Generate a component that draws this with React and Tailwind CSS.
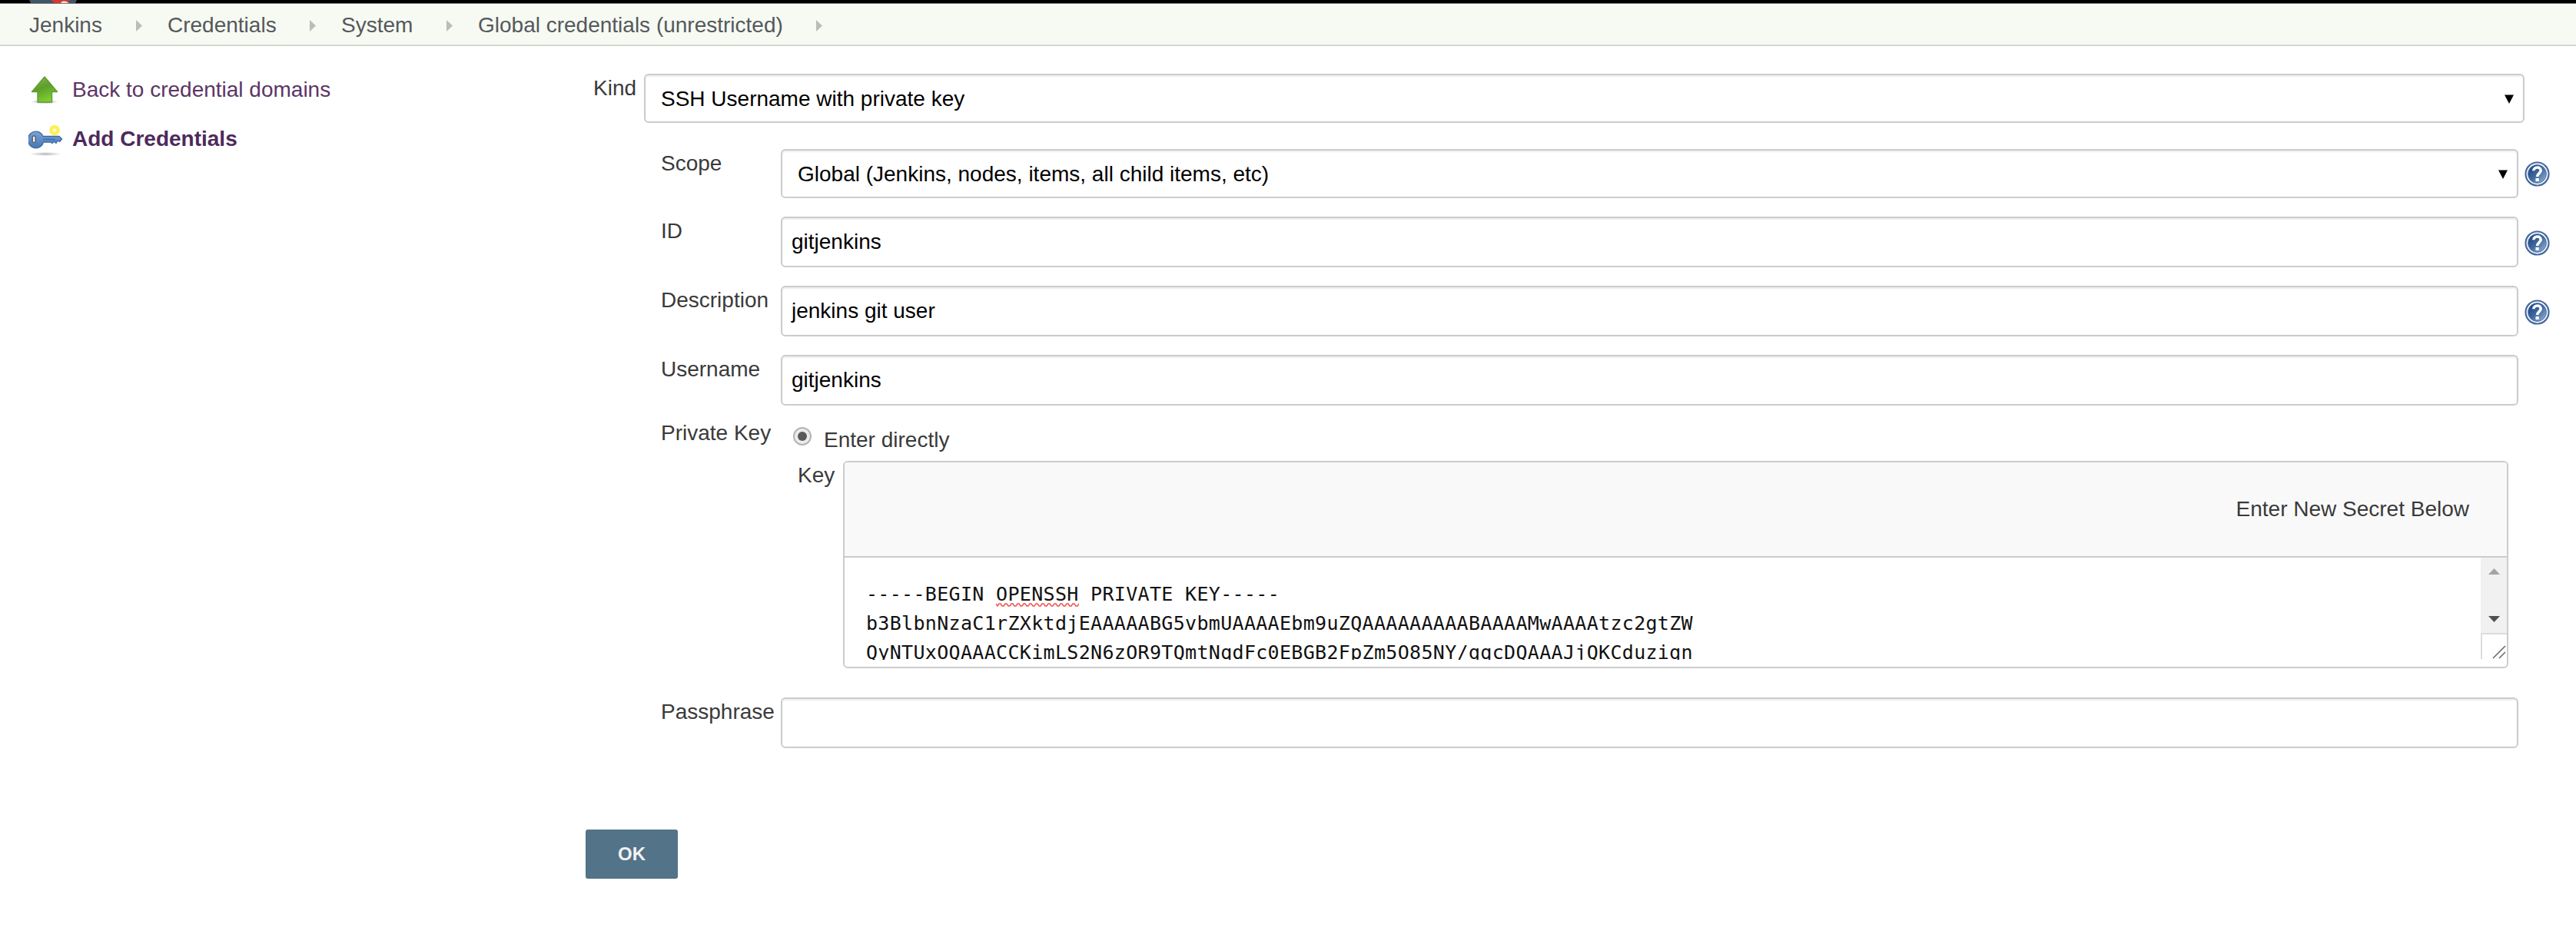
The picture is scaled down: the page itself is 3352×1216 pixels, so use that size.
import React from "react";

const CRUMBS = [
  ["Jenkins", "w-[180px]"],
  ["Credentials", "w-[226px]"],
  ["System", "w-[178px]"],
  ["Global credentials (unrestricted)", "w-[481px]"],
];

function TopBar() {
  return (
    <div className="h-[5px] bg-black border-b border-[#77756f] pl-[38px]">
      <svg width="64" height="4" viewBox="0 0 64 4" className="block">
        <path d="M0 0H62L60 4H2Z" fill="#3f5568" />
        <path d="M28 0H53L49 4H33Z" fill="#d8392f" />
        <path d="M41 4C42 1 46 1 48 2L52 4Z" fill="#efe6e0" />
      </svg>
    </div>
  );
}

function Breadcrumbs() {
  return (
    <nav className="mt-[2px] h-[53px] bg-[#f6faf2] border-b-2 border-[#d3d6cf] flex pl-[38px] text-[#55585c]">
      {CRUMBS.map(([label, width]) => (
        <div key={label} className={"flex justify-between shrink-0 h-[51px] " + width}>
          <span className="leading-8 mt-[10px] whitespace-nowrap">{label}</span>
          <svg width="8" height="15" viewBox="0 0 8 15" className="mt-[19px] mr-[33px] shrink-0">
            <path d="M0 0L8 7.5L0 15Z" fill="#bbbbbb" />
          </svg>
        </div>
      ))}
    </nav>
  );
}

function UpArrowIcon() {
  return (
    <svg width="36" height="38" viewBox="0 0 36 38">
      <defs>
        <linearGradient id="up" x1="0" y1="0" x2="0.4" y2="1">
          <stop offset="0" stopColor="#8cc152" />
          <stop offset="0.5" stopColor="#5e9e2c" />
          <stop offset="1" stopColor="#7ccb30" />
        </linearGradient>
        <radialGradient id="upShade">
          <stop offset="0" stopColor="#000" stopOpacity="0.4" />
          <stop offset="1" stopColor="#000" stopOpacity="0" />
        </radialGradient>
      </defs>
      <ellipse cx="18" cy="34.5" rx="18" ry="3" fill="url(#upShade)" />
      <path d="M18 2L34.5 21.5H27.5V35H9V21.5H1.5Z" fill="url(#up)" stroke="#5f9c33" strokeWidth="1.4" strokeLinejoin="round" />
    </svg>
  );
}

function KeyIcon() {
  return (
    <svg width="46" height="42" viewBox="0 0 46 42">
      <defs>
        <radialGradient id="keyShade">
          <stop offset="0" stopColor="#000" stopOpacity="0.3" />
          <stop offset="1" stopColor="#000" stopOpacity="0" />
        </radialGradient>
        <linearGradient id="keyBody" x1="0" y1="0" x2="0" y2="1">
          <stop offset="0" stopColor="#7ba3d6" />
          <stop offset="1" stopColor="#4677b6" />
        </linearGradient>
      </defs>
      <ellipse cx="22" cy="38.5" rx="21" ry="2.6" fill="url(#keyShade)" />
      <circle cx="34" cy="7.5" r="4.6" fill="#fffbd0" stroke="#fdf05a" strokeWidth="4.5" />
      <path d="M19 15.5H40L43.5 19L40.5 22.5L38 21L36 24.5L33.5 22L31 24.5L28.5 23H19.5A10.3 10.8 0 1 1 19 15.5Z" fill="url(#keyBody)" stroke="#4068a0" strokeWidth="1.3" strokeLinejoin="round" />
      <rect x="5.2" y="15" width="4" height="8.5" rx="1.5" fill="#f2f2f2" stroke="#56657c" strokeWidth="1.6" />
      <path d="M19 19.5H35" stroke="#3f6aa6" strokeWidth="1.4" />
    </svg>
  );
}

function HelpIcon() {
  return (
    <svg width="33" height="33" viewBox="0 0 33 33" className="shrink-0">
      <defs>
        <linearGradient id="help" x1="0" y1="0" x2="1" y2="1">
          <stop offset="0.1" stopColor="#1f4680" />
          <stop offset="0.5" stopColor="#40699f" />
          <stop offset="0.9" stopColor="#8aaad0" />
        </linearGradient>
      </defs>
      <circle cx="16.5" cy="16.5" r="15" fill="#fff" stroke="#44699e" strokeWidth="2.2" />
      <circle cx="16.5" cy="16.5" r="12" fill="url(#help)" stroke="#5579aa" strokeWidth="1" />
      <path d="M11.8 12.2C12 6.8 21 6.6 21.2 12C21.2 15.6 16.6 15.6 16.6 20" fill="none" stroke="#fff" strokeWidth="3.6" />
      <rect x="14.5" y="22" width="4.2" height="4" fill="#fff" />
    </svg>
  );
}

function Caret() {
  return (
    <svg width="12" height="12" viewBox="0 0 12 12" className="ml-auto shrink-0">
      <path d="M0 0.5H12L6 12Z" fill="#000" />
    </svg>
  );
}

const BOX = "flex items-center border-2 border-[#cccccc] rounded-[6px] bg-white text-black shadow-[inset_0_2px_2px_rgba(0,0,0,0.07)] ";

/* One labelled line of the form; `top` is the gap above it. */
function Field({ label, value, top, select, help }) {
  return (
    <div className={"flex items-start " + top}>
      <label className="w-[156px] shrink-0 leading-8 mt-[3px] whitespace-nowrap">{label}</label>
      <div className={BOX + "w-[2261px] shrink-0 " + (select ? "h-16 pl-5 pr-3 pt-[1px]" : "h-[66px] pl-3")}>
        <span>{value}</span>
        {select && <Caret />}
      </div>
      {help && <div className={"ml-2 " + (select ? "mt-4" : "mt-[18px]")}><HelpIcon /></div>}
    </div>
  );
}

function SecretBox() {
  return (
    <div className="w-[2167px] h-[270px] shrink-0 border-2 border-[#cccccc] rounded-[6px] bg-white overflow-hidden">
      <div className="h-[124px] bg-[#f9f9f9] border-b-2 border-[#cccccc] flex justify-end pr-[49px]">
        <span className="leading-8 mt-[45px]">Enter New Secret Below</span>
      </div>
      <div className="flex justify-between">
        <div className="h-[133px] overflow-hidden pl-[28px] pt-[29px] font-['DejaVu_Sans_Mono',monospace] text-[25px] tracking-[0.32px] leading-[38px] text-[#111] whitespace-pre">
          <div>-----BEGIN <span className="relative">OPENSSH<svg width="108" height="5" viewBox="0 0 108 5" className="absolute left-0 bottom-[-2px]">
            <path d={"M0 1" + Array.from({ length: 27 }, (_, i) => `L${i * 4 + 2} ${i % 2 ? 1 : 4}L${i * 4 + 4} ${i % 2 ? 4 : 1}`).join("")} fill="none" stroke="#f0504c" strokeWidth="1.4" />
          </svg></span> PRIVATE KEY-----</div>
          <div>b3BlbnNzaC1rZXktdjEAAAAABG5vbmUAAAAEbm9uZQAAAAAAAAABAAAAMwAAAAtzc2gtZW</div>
          <div>QyNTUxOQAAACCKimLS2N6zOR9TQmtNqdFc0EBGB2FpZm5O85NY/gqcDQAAAJjQKCduzign</div>
        </div>
        <div className="w-[34px]">
          <div className="h-[98px] bg-[#f1f1f1] flex flex-col items-center justify-between pt-[14px] pb-[14px]">
            <svg width="15" height="8" viewBox="0 0 15 8"><path d="M0 8L7.5 0L15 8Z" fill="#a3a3a3" /></svg>
            <svg width="15" height="8" viewBox="0 0 15 8"><path d="M0 0H15L7.5 8Z" fill="#505050" /></svg>
          </div>
          <div className="h-[34px] border-t-2 border-l-2 border-[#dcdcdc] flex justify-end items-end pr-[1px]">
            <svg width="18" height="18" viewBox="0 0 18 18">
              <path d="M1 17L17 1M9 17L17 9" stroke="#6a6a6a" strokeWidth="1.6" />
            </svg>
          </div>
        </div>
      </div>
    </div>
  );
}

export default function App() {
  return (
    <div className="w-[3352px] h-[1216px] overflow-hidden bg-white font-['Liberation_Sans',Arial,sans-serif] text-[28px] leading-8 text-[#3a3a3a]">
      <TopBar />
      <Breadcrumbs />
      <div className="flex">
        <aside className="w-[762px] shrink-0 pl-[36px] pt-[38px] text-[#5c3566]">
          <div className="flex items-start h-16">
            <div className="w-[58px] pl-1"><UpArrowIcon /></div>
            <a className="mt-[3px]">Back to credential domains</a>
          </div>
          <div className="flex items-start">
            <div className="w-[58px] pl-px"><KeyIcon /></div>
            <a className="mt-[3px] font-bold text-[#4d2a5c]">Add Credentials</a>
          </div>
        </aside>
        <main className="pt-[36px]">
          <div className="flex items-start pl-[10px]">
            <label className="w-[66px] mt-[3px]">Kind</label>
            <div className={BOX + "w-[2447px] h-16 pl-5 pr-3 pt-[1px]"}>
              <span>SSH Username with private key</span>
              <Caret />
            </div>
          </div>
          <div className="pl-[98px]">
            <Field label="Scope" value="Global (Jenkins, nodes, items, all child items, etc)" top="mt-[34px]" select help />
            <Field label="ID" value="gitjenkins" top="mt-6" help />
            <Field label="Description" value="jenkins git user" top="mt-6" help />
            <Field label="Username" value="gitjenkins" top="mt-6" />
            <div className="flex items-start mt-[18px] h-[54px]">
              <span className="w-[172px] mt-[2px]">Private Key</span>
              <span className="mt-[10px] w-6 h-6 rounded-full border-2 border-[#b4b4b4] bg-[#ececec] flex items-center justify-center">
                <span className="w-3 h-3 rounded-full bg-[#5a5a5a]" />
              </span>
              <span className="ml-[16px] mt-[11px]">Enter directly</span>
            </div>
            <div className="flex items-start pl-[178px]">
              <label className="w-[59px] shrink-0 mt-[3px]">Key</label>
              <SecretBox />
            </div>
            <Field label="Passphrase" value="" top="mt-[38px]" />
          </div>
          <button className="block mt-[106px] w-[120px] h-16 rounded-[3px] bg-[#527388] text-[#f2f2f2] text-[24px] font-bold">OK</button>
        </main>
      </div>
    </div>
  );
}
